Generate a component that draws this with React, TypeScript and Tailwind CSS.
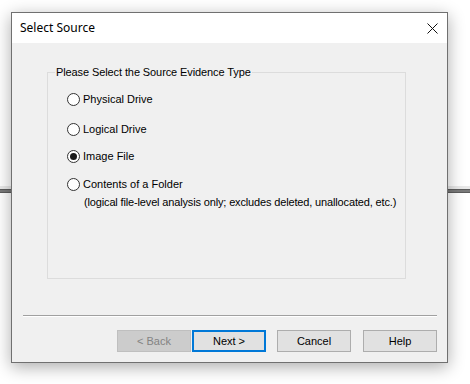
import React, { useState } from 'react';

const options = [
  { id: 'physical', label: 'Physical Drive', mt: 'mt-[12px]' },
  { id: 'logical', label: 'Logical Drive', mt: 'mt-[14px]' },
  { id: 'image', label: 'Image File', mt: 'mt-[11px]' },
  { id: 'folder', label: 'Contents of a Folder', mt: 'mt-[12px]' },
];

const Radio: React.FC<{ checked: boolean }> = ({ checked }) => (
  <span className="w-[13px] h-[13px] rounded-full border border-[#333333] bg-white flex items-center justify-center shrink-0">
    {checked && <span className="w-[7px] h-[7px] rounded-full bg-[#1a1a1a]" />}
  </span>
);

const App: React.FC = () => {
  const [source, setSource] = useState('image');

  return (
    <div className="relative w-[470px] h-[384px] bg-white overflow-hidden" style={{ fontFamily: '"Liberation Sans", Arial, sans-serif' }}>
      {/* app behind the dialog */}
      <div className="mt-[186px] h-[3px] bg-[#e9e9e9]" />
      <div className="h-[4px] bg-[#7a7a7a] border-y border-[#5c5c5c]" />

      <div className="absolute left-[11px] top-[12px] w-[437px] h-[351px] border border-[#707070] bg-[#f0f0f0] flex flex-col shadow-[0_4px_16px_rgba(0,0,0,0.33)]">
        <div className="h-[30px] bg-white flex items-center justify-between pl-[8px] pr-[9px]">
          <span className="text-[12px] text-black" style={{ fontFamily: '"Noto Sans", "Open Sans", sans-serif' }}>Select Source</span>
          <svg width="11" height="11" viewBox="0 0 11 11">
            <path d="M0.5 0.5 L10.5 10.5 M10.5 0.5 L0.5 10.5" stroke="#111" strokeWidth="1" fill="none" />
          </svg>
        </div>

        <div className="flex-1 flex flex-col text-[11px] text-black">
          <div className="ml-[35px] mt-[29px] w-[359px] h-[207px] border border-[#dcdcdc]">
            <div className="-mt-[8px] ml-[7px] w-fit px-[1px] h-[14px] leading-[14px] bg-[#f0f0f0] tracking-[-0.1px]">
              Please Select the Source Evidence Type
            </div>
            {options.map((o) => (
              <div key={o.id} className={o.mt}>
                <div className="flex items-center h-[16px] pl-[19px] gap-[3px] cursor-default" onClick={() => setSource(o.id)}>
                  <Radio checked={source === o.id} />
                  <span className="leading-[16px]">{o.label}</span>
                </div>
                {o.id === 'folder' && (
                  <div className="mt-[2px] pl-[36px] h-[16px] leading-[16px] whitespace-nowrap tracking-[-0.15px]">
                    (logical file-level analysis only; excludes deleted, unallocated, etc.)
                  </div>
                )}
              </div>
            ))}
          </div>

          <div className="ml-[11px] mt-[36px] w-[414px] border-t border-[#a0a0a0] border-b border-b-white" />

          <div className="flex mt-[13px] ml-[105px] h-[22px]">
            <button disabled className="w-[74px] h-[22px] bg-[#cccccc] border border-[#bfbfbf] text-[#838383] text-[11px]">&lt; Back</button>
            <button className="ml-[1px] w-[74px] h-[22px] bg-[#e1e1e1] border-2 border-[#0078d7] text-black text-[11px]">Next &gt;</button>
            <button className="ml-[11px] w-[74px] h-[22px] bg-[#e1e1e1] border border-[#adadad] text-black text-[11px]">Cancel</button>
            <button className="ml-[12px] w-[74px] h-[22px] bg-[#e1e1e1] border border-[#adadad] text-black text-[11px]">Help</button>
          </div>
        </div>
      </div>
    </div>
  );
};

export default App;
